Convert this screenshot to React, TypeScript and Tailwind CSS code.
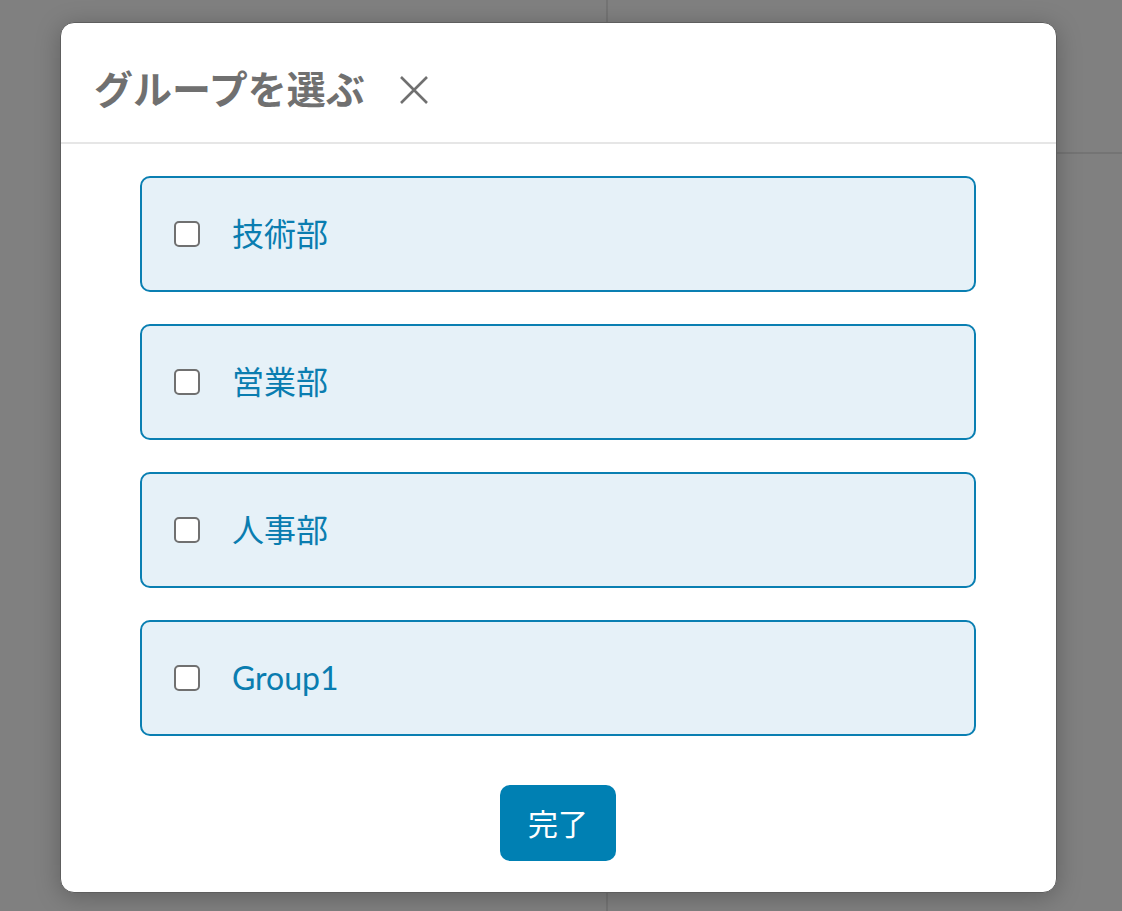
import React from 'react';

const groups = ['技術部', '営業部', '人事部', 'Group1'];

function GroupRow({ label }: { label: string }) {
  return (
    <label className="flex h-[116px] items-center rounded-[10px] border-2 border-[#0a7fb2] bg-[#e6f1f8] pl-[32px]">
      <span className="h-[26px] w-[26px] shrink-0 rounded-[5px] border-2 border-[#707070] bg-white" />
      <span className="ml-[32px] text-[32px] leading-none text-[#0a7db0]">{label}</span>
    </label>
  );
}

export default function App() {
  return (
    <div
      className="relative min-h-screen overflow-hidden bg-[#808080]"
      style={{ fontFamily: 'Lato, "Noto Sans CJK JP", sans-serif' }}
    >
      {/* page behind the overlay */}
      <div className="absolute left-[606px] top-0 h-full w-[2px] bg-[#747474]" />
      <div className="absolute left-[607px] top-[152px] h-[2px] w-[515px] bg-[#747474]" />

      <div className="relative ml-[60px] mt-[22px] flex h-[871px] w-[997px] flex-col overflow-hidden rounded-[14px] border border-[#5e5e5e] bg-white shadow-[0_4px_24px_rgba(0,0,0,0.25)]">
        <div className="flex h-[121px] shrink-0 items-center border-b-2 border-[#e6e6e6] pl-[33px] pt-[14px]">
          <h1 className="text-[39px] font-bold leading-none text-[#707070]">グループを選ぶ</h1>
          <button className="ml-[34px] flex h-[30px] w-[30px] items-center justify-center">
            <svg width="30" height="30" viewBox="0 0 30 30" fill="none">
              <path d="M2 2 L28 28 M28 2 L2 28" stroke="#707070" strokeWidth="2.6" strokeLinecap="butt" />
            </svg>
          </button>
        </div>

        <div className="flex flex-1 flex-col pl-[79px] pr-[80px] pt-[32px]">
          <div className="flex flex-col gap-[32px]">
            {groups.map((g) => (
              <GroupRow key={g} label={g} />
            ))}
          </div>
          <div className="mt-[49px] flex justify-center">
            <button className="flex h-[76px] w-[116px] items-center justify-center rounded-[10px] bg-[#0080b3] text-[30px] leading-none text-white">
              完了
            </button>
          </div>
        </div>
      </div>
    </div>
  );
}
